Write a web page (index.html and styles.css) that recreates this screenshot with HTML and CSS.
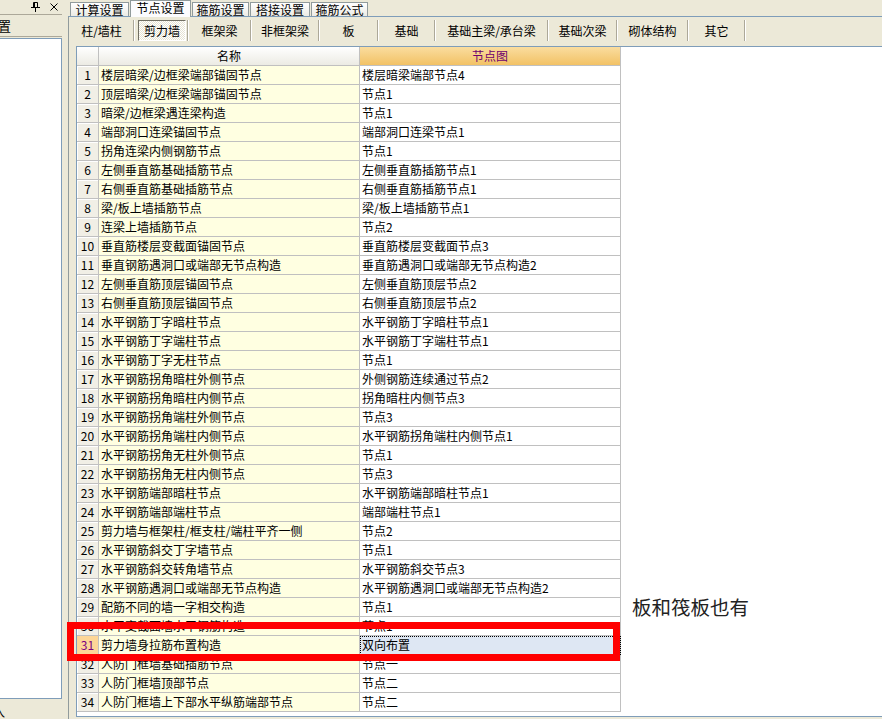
FILE: index.html
```html
<!DOCTYPE html>
<html lang="zh-CN">
<head>
<meta charset="utf-8">
<title>节点设置</title>
<link rel="stylesheet" href="styles.css">
</head>
<body>
<div class="left">
  <div class="titlebar">
    <svg class="pin" width="9" height="10" viewBox="0 0 9 10"><path d="M2.5 0.5h4v5h-4z M3.5 0.5v5 M0 5.5h9 M4.5 6v4" fill="none" stroke="#000" stroke-width="1"/></svg>
    <svg class="close" width="8" height="8" viewBox="0 0 8 8"><path d="M0.5 0.5l7 7 M7.5 0.5l-7 7" stroke="#000" stroke-width="1"/></svg>
  </div>
  <div class="phead"><span>设置</span></div>
  <div class="pbody"></div>
  <div class="pfoot"><span>入</span></div>
</div>
<div class="splitter"></div>
<div class="main">
  <div class="tabs">
    <div class="tab t59">计算设置</div>
    <div class="tab t61 active">节点设置</div>
    <div class="tab t57">箍筋设置</div>
    <div class="tab t60">搭接设置</div>
    <div class="tab t57">箍筋公式</div>
  </div>
  <div class="page">
    <div class="toolbar">
      <div class="tb w64">柱/墙柱</div>
      <div class="tb w53"><span class="pressed">剪力墙</span></div>
      <div class="tb w62">框架梁</div>
      <div class="tb w67">非框架梁</div>
      <div class="tb w58">板</div>
      <div class="tb w56">基础</div>
      <div class="tb w112">基础主梁/承台梁</div>
      <div class="tb w68">基础次梁</div>
      <div class="tb w70">砌体结构</div>
      <div class="tb w56">其它</div>
    </div>
    <div class="grid">
      <table>
        <colgroup><col class="c-num"><col class="c-name"><col class="c-node"></colgroup>
        <thead>
          <tr><th class="num hnum"></th><th class="hname">名称</th><th class="hnode">节点图</th></tr>
        </thead>
        <tbody>
          <tr><td class="num">1</td><td class="name">楼层暗梁/边框梁端部锚固节点</td><td class="node">楼层暗梁端部节点4</td></tr>
          <tr><td class="num">2</td><td class="name">顶层暗梁/边框梁端部锚固节点</td><td class="node">节点1</td></tr>
          <tr><td class="num">3</td><td class="name">暗梁/边框梁遇连梁构造</td><td class="node">节点1</td></tr>
          <tr><td class="num">4</td><td class="name">端部洞口连梁锚固节点</td><td class="node">端部洞口连梁节点1</td></tr>
          <tr><td class="num">5</td><td class="name">拐角连梁内侧钢筋节点</td><td class="node">节点1</td></tr>
          <tr><td class="num">6</td><td class="name">左侧垂直筋基础插筋节点</td><td class="node">左侧垂直筋插筋节点1</td></tr>
          <tr><td class="num">7</td><td class="name">右侧垂直筋基础插筋节点</td><td class="node">右侧垂直筋插筋节点1</td></tr>
          <tr><td class="num">8</td><td class="name">梁/板上墙插筋节点</td><td class="node">梁/板上墙插筋节点1</td></tr>
          <tr><td class="num">9</td><td class="name">连梁上墙插筋节点</td><td class="node">节点2</td></tr>
          <tr><td class="num">10</td><td class="name">垂直筋楼层变截面锚固节点</td><td class="node">垂直筋楼层变截面节点3</td></tr>
          <tr><td class="num">11</td><td class="name">垂直钢筋遇洞口或端部无节点构造</td><td class="node">垂直筋遇洞口或端部无节点构造2</td></tr>
          <tr><td class="num">12</td><td class="name">左侧垂直筋顶层锚固节点</td><td class="node">左侧垂直筋顶层节点2</td></tr>
          <tr><td class="num">13</td><td class="name">右侧垂直筋顶层锚固节点</td><td class="node">右侧垂直筋顶层节点2</td></tr>
          <tr><td class="num">14</td><td class="name">水平钢筋丁字暗柱节点</td><td class="node">水平钢筋丁字暗柱节点1</td></tr>
          <tr><td class="num">15</td><td class="name">水平钢筋丁字端柱节点</td><td class="node">水平钢筋丁字端柱节点1</td></tr>
          <tr><td class="num">16</td><td class="name">水平钢筋丁字无柱节点</td><td class="node">节点1</td></tr>
          <tr><td class="num">17</td><td class="name">水平钢筋拐角暗柱外侧节点</td><td class="node">外侧钢筋连续通过节点2</td></tr>
          <tr><td class="num">18</td><td class="name">水平钢筋拐角暗柱内侧节点</td><td class="node">拐角暗柱内侧节点3</td></tr>
          <tr><td class="num">19</td><td class="name">水平钢筋拐角端柱外侧节点</td><td class="node">节点3</td></tr>
          <tr><td class="num">20</td><td class="name">水平钢筋拐角端柱内侧节点</td><td class="node">水平钢筋拐角端柱内侧节点1</td></tr>
          <tr><td class="num">21</td><td class="name">水平钢筋拐角无柱外侧节点</td><td class="node">节点1</td></tr>
          <tr><td class="num">22</td><td class="name">水平钢筋拐角无柱内侧节点</td><td class="node">节点3</td></tr>
          <tr><td class="num">23</td><td class="name">水平钢筋端部暗柱节点</td><td class="node">水平钢筋端部暗柱节点1</td></tr>
          <tr><td class="num">24</td><td class="name">水平钢筋端部端柱节点</td><td class="node">端部端柱节点1</td></tr>
          <tr><td class="num">25</td><td class="name">剪力墙与框架柱/框支柱/端柱平齐一侧</td><td class="node">节点2</td></tr>
          <tr><td class="num">26</td><td class="name">水平钢筋斜交丁字墙节点</td><td class="node">节点1</td></tr>
          <tr><td class="num">27</td><td class="name">水平钢筋斜交转角墙节点</td><td class="node">水平钢筋斜交节点3</td></tr>
          <tr><td class="num">28</td><td class="name">水平钢筋遇洞口或端部无节点构造</td><td class="node">水平钢筋遇洞口或端部无节点构造2</td></tr>
          <tr><td class="num">29</td><td class="name">配筋不同的墙一字相交构造</td><td class="node">节点1</td></tr>
          <tr><td class="num">30</td><td class="name">水平变截面墙水平钢筋构造</td><td class="node">节点1</td></tr>
          <tr class="sel"><td class="num">31</td><td class="name">剪力墙身拉筋布置构造</td><td class="node cur">双向布置</td></tr>
          <tr><td class="num">32</td><td class="name">人防门框墙基础插筋节点</td><td class="node">节点一</td></tr>
          <tr><td class="num">33</td><td class="name">人防门框墙顶部节点</td><td class="node">节点二</td></tr>
          <tr><td class="num">34</td><td class="name">人防门框墙上下部水平纵筋端部节点</td><td class="node">节点二</td></tr>
        </tbody>
      </table>
    </div>
  </div>
</div>
<div class="note">板和筏板也有</div>
<div class="redbox"></div>
</body>
</html>
```

FILE: styles.css
```css
* { box-sizing: border-box; }

body {
  margin: 0;
  width: 882px;
  height: 719px;
  overflow: hidden;
  background: #ECE9D8;
  font-family: "Noto Sans CJK SC", "Liberation Sans", sans-serif;
  font-size: 12px;
  color: #000;
  display: flex;
  position: relative;
}

/* left docked panel */
.left {
  width: 62px;
  display: flex;
  flex-direction: column;
}
.titlebar {
  height: 15px;
  border-bottom: 1px solid #ACA899;
  display: flex;
  justify-content: flex-end;
  align-items: center;
  gap: 10px;
  padding-right: 4px;
}
.pin, .close { display: block; }
.phead {
  height: 22px;
  border-bottom: 1px solid #ACA899;
  display: flex;
  align-items: center;
  overflow: hidden;
  white-space: nowrap;
  font-size: 13px;
}
.phead span { margin-left: -15px; }
.pbody {
  flex: 1;
  margin-top: 1px;
  background: #fff;
  border: 1px solid #7F9DB9;
  border-left: none;
}
.pfoot {
  height: 20px;
  overflow: hidden;
  white-space: nowrap;
  line-height: 26px;
}
.pfoot span { margin-left: -7px; }

.splitter { width: 6px; }

/* main tab control */
.main {
  flex: 1;
  min-width: 0;
  display: flex;
  flex-direction: column;
}
.tabs {
  height: 16px;
  display: flex;
  align-items: flex-end;
  gap: 1px;
  padding-left: 2px;
}
.tab {
  height: 14px;
  border: 1px solid #919B9C;
  border-bottom: none;
  background: linear-gradient(#ffffff, #ECEBE5);
  display: flex;
  align-items: center;
  justify-content: center;
  line-height: 12px;
  white-space: nowrap;
}
.tab.active {
  height: 17px;
  margin-bottom: -1px;
  background: #FCFCFE;
  position: relative;
  z-index: 1;
  padding-bottom: 2px;
}
.t57 { width: 57px; }
.t59 { width: 59px; }
.t60 { width: 60px; }
.t61 { width: 61px; }

.page {
  flex: 1;
  min-height: 0;
  border-top: 1px solid #7F9DB9;
  border-left: 1px solid #919B9C;
  display: flex;
  flex-direction: column;
}
.toolbar {
  height: 29px;
  display: flex;
  align-items: flex-start;
  padding: 3px 0 0 1px;
}
.tb {
  height: 21px;
  display: flex;
  align-items: center;
  justify-content: center;
  border-right: 1px solid #ACA899;
  box-shadow: 1px 0 0 #fff;
  margin-right: 1px;
  white-space: nowrap;
  padding-bottom: 1px;
}
.w53 { width: 53px; justify-content: flex-end; padding: 0 1px 0 0; }
.w56 { width: 56px; }
.w58 { width: 58px; }
.w62 { width: 62px; }
.w64 { width: 64px; }
.w67 { width: 67px; }
.w68 { width: 68px; }
.w70 { width: 70px; }
.w112 { width: 112px; }
.pressed {
  width: 48px;
  height: 21px;
  display: flex;
  align-items: center;
  justify-content: center;
  border: 1px solid;
  border-color: #716F64 #ffffff #ffffff #716F64;
  background: repeating-conic-gradient(#ffffff 0 25%, #E6E3D3 0 50%) 0 0 / 2px 2px;
  padding-bottom: 1px;
}

/* grid */
.grid {
  flex: 1;
  min-height: 0;
  margin: 0 0 2px 7px;
  border: 1px solid #7F9DB9;
  border-right: none;
  background: #fff;
  overflow: hidden;
}
table {
  border-collapse: separate;
  border-spacing: 0;
  table-layout: fixed;
  width: 544px;
}
.c-num { width: 22px; }
.c-name { width: 261px; }
.c-node { width: 261px; }
th, td {
  height: 19px;
  padding: 0 0 0 2px;
  border-right: 1px solid #C0C0C0;
  border-bottom: 1px solid #C0C0C0;
  white-space: nowrap;
  overflow: hidden;
  font-weight: normal;
  line-height: 18px;
  text-align: left;
}
th {
  text-align: center;
  padding: 0;
}
.hnum, .hname {
  background: linear-gradient(#FFFFFF, #ECEBE4);
}
.hnode {
  background: linear-gradient(#FADD9F, #F2C265);
  color: #6E006E;
}
td.num {
  text-align: center;
  padding: 0;
  background: #F1EFE6;
  box-shadow: inset 1px 1px 0 #ffffff;
}
td.name { background: #FFFFE1; }
td.node { background: #ffffff; }
.sel td.num {
  background: #FDD697;
  color: #7A0080;
  box-shadow: none;
}
td.node.cur {
  background: #DEE7F3;
  outline: 1px dotted #000;
  outline-offset: -1px;
}

/* overlays */
.note {
  position: absolute;
  left: 632px;
  top: 596px;
  font-family: "Noto Sans CJK SC", sans-serif;
  font-size: 19.5px;
  line-height: 21px;
  color: #222;
  white-space: nowrap;
}
.redbox {
  position: absolute;
  left: 67px;
  top: 622px;
  width: 553px;
  height: 39px;
  border: 7px solid #FF0000;
}
```
